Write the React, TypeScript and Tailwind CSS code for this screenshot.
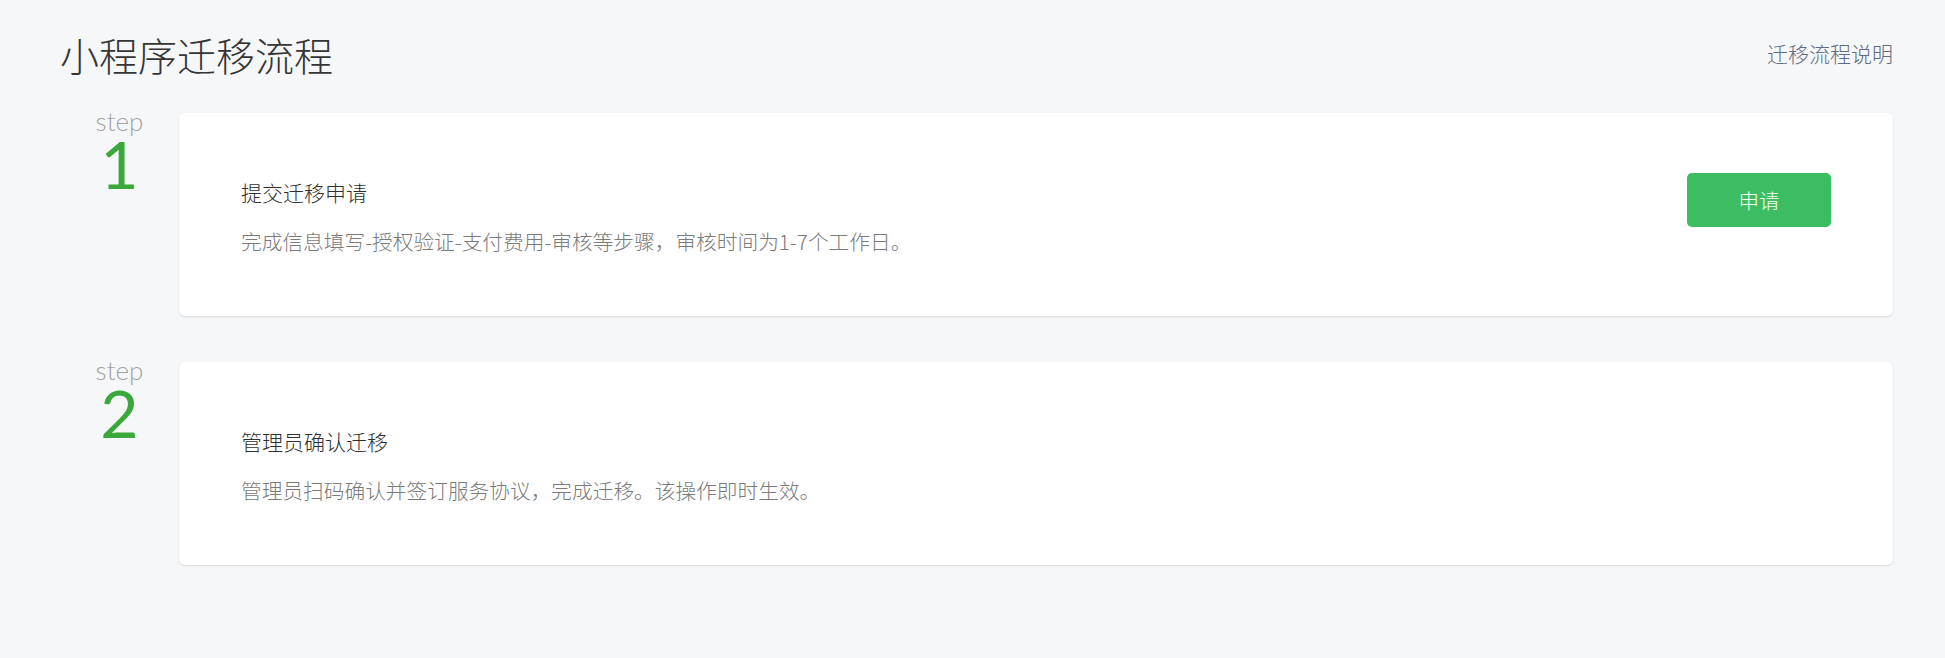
import { useState } from "react";

const cjk = "font-['Noto_Sans_CJK_SC','Noto_Sans',sans-serif]";

const steps = [
    {
        title: "提交迁移申请",
        desc: "完成信息填写-授权验证-支付费用-审核等步骤，审核时间为1-7个工作日。",
        action: "申请",
    },
    {
        title: "管理员确认迁移",
        desc: "管理员扫码确认并签订服务协议，完成迁移。该操作即时生效。",
    },
];

export default function App() {
    const [applied, setApplied] = useState(false);

    return (
        <div className={`min-h-[658px] bg-[#f6f7f9] pl-[60px] pr-[52px] pt-[35px] ${cjk}`}>
            <div className="flex items-center justify-between">
                <h1 className="text-[39px] leading-none text-[#353535] font-light">
                    小程序迁移流程
                </h1>
                <a className="text-[21px] leading-none text-[#5f6b80] font-light cursor-pointer mt-[-2px]">
                    迁移流程说明
                </a>
            </div>

            <div className="mt-[39px] flex flex-col gap-[46px]">
                {steps.map((s, i) => (
                    <div key={i} className="flex">
                        <div className="w-[119px] flex flex-col items-center font-['Lato',sans-serif]">
                            <span className="text-[26px] leading-[20px] font-light text-[#a3a3a3] mt-[-2px]">
                                step
                            </span>
                            <span className="text-[66px] leading-[66px] text-[#3aa83a]">
                                {i + 1}
                            </span>
                        </div>
                        <div className="flex-1 h-[203px] bg-white rounded-[6px] shadow-[0_1px_2px_rgba(0,0,0,0.12)] flex items-start justify-between pl-[62px] pr-[62px]">
                            <div className="pt-[63px]">
                                <div className="text-[21px] leading-[32px] font-light text-[#2f2f2f]">
                                    {s.title}
                                </div>
                                <div className="mt-[17px] text-[20.7px] leading-[32px] font-light text-[#7a7a7a]">
                                    {s.desc}
                                </div>
                            </div>
                            {s.action && (
                                <button
                                    onClick={() => setApplied(!applied)}
                                    className="mt-[60px] w-[144px] h-[54px] rounded-[5px] bg-[#3dbd62] text-[20.5px] font-light text-[#effff2] hover:bg-[#35ad57]"
                                >
                                    {s.action}
                                </button>
                            )}
                        </div>
                    </div>
                ))}
            </div>
        </div>
    );
}
